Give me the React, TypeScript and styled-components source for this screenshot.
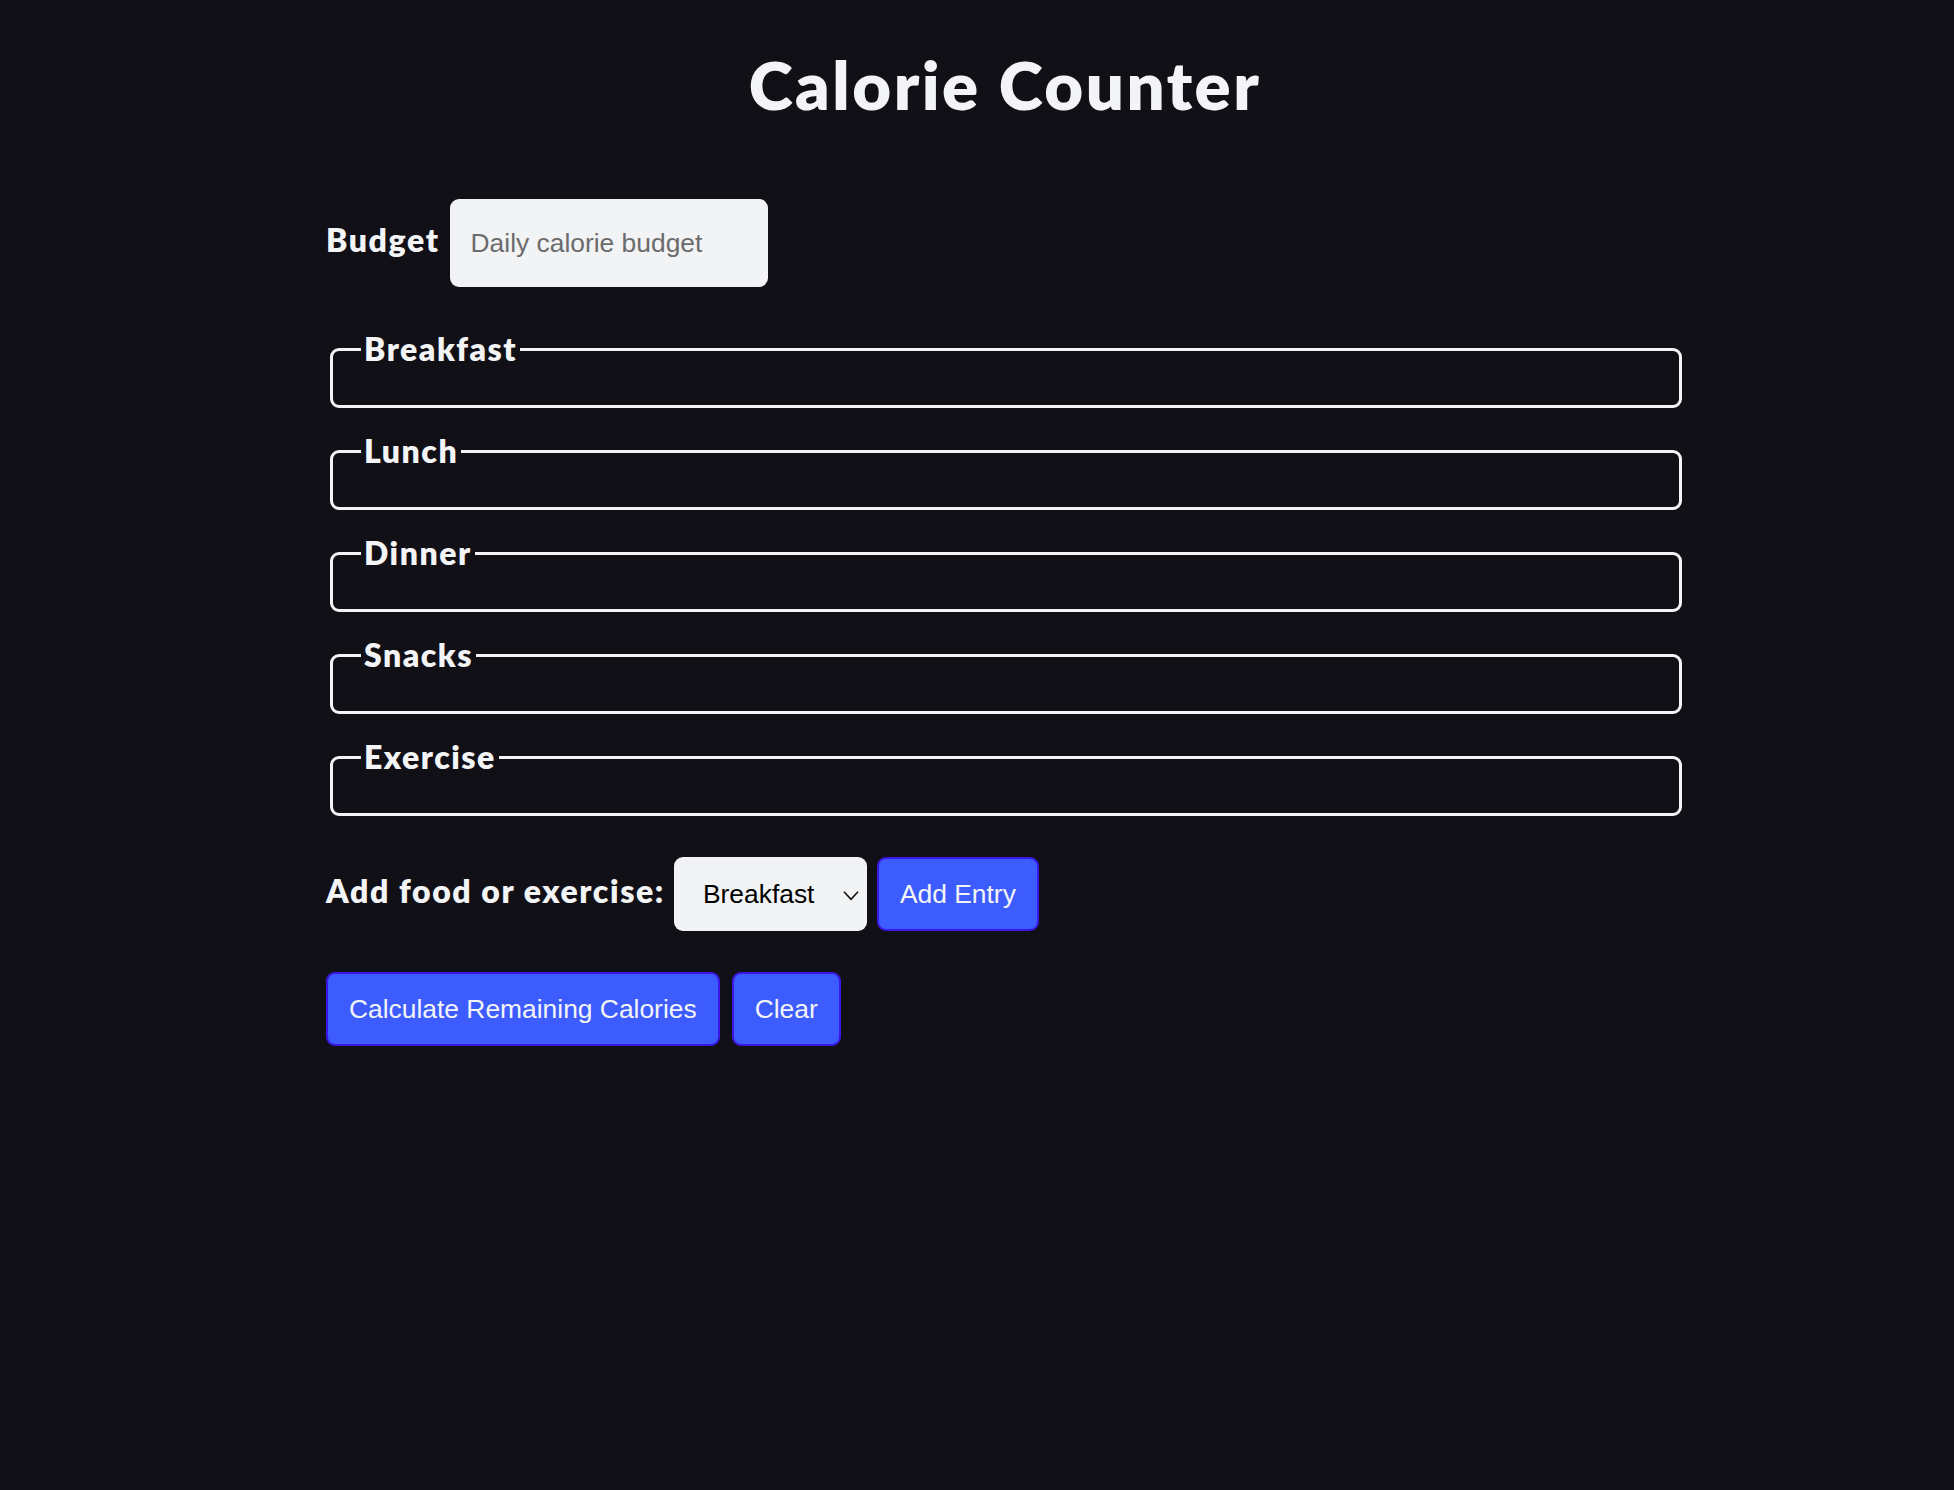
import React from "react";
import styled, { createGlobalStyle } from "styled-components";

const GlobalStyle = createGlobalStyle`
  html, body {
    margin: 0;
    padding: 0;
    background: #121017;
    color: #f3f4f6;
    font-family: "Lato", "Liberation Sans", sans-serif;
  }
  * { box-sizing: border-box; }
`;

const Page = styled.div`
  min-height: 1490px;
  display: flex;
  justify-content: center;
  padding-left: 56px;
`;

const Container = styled.main`
  width: 1358px;
  display: flex;
  flex-direction: column;
`;

const Title = styled.h1`
  margin: 44px 0 0;
  font-family: "Lato", sans-serif;
  font-weight: 800;
  font-size: 67px;
  line-height: 80px;
  letter-spacing: 2.5px;
  text-align: center;
  color: #f3f4f6;
`;

const BudgetRow = styled.div`
  display: flex;
  align-items: center;
  gap: 10px;
  margin-top: 75px;
  margin-bottom: 43px;
`;

const Label = styled.label`
  padding-bottom: 8px;
  font-family: "Lato", sans-serif;
  font-weight: 800;
  font-size: 32px;
  letter-spacing: 1.6px;
  color: #f3f4f6;
`;

const TextInput = styled.input`
  width: 318px;
  height: 88px;
  padding: 0 21px;
  border: none;
  border-radius: 9px;
  background: #f2f3f5;
  font-family: "Liberation Sans", Arial, sans-serif;
  font-size: 26.4px;
  color: #111;
  outline: none;
  &::placeholder {
    color: #6b6b6b;
  }
`;

const MealFieldset = styled.fieldset`
  margin: 0 2px 24px 4px;
  padding: 18px 28px 19px;
  border: 3px solid #f3f4f6;
  border-radius: 9px;
  min-width: 0;
`;

const Legend = styled.legend`
  padding: 0 3px;
  font-family: "Lato", sans-serif;
  font-weight: 800;
  font-size: 32px;
  line-height: 38px;
  letter-spacing: 1.5px;
  color: #f3f4f6;
`;

const ActionRow = styled.div`
  display: flex;
  align-items: center;
  margin-top: 17px;
`;

const SelectWrap = styled.div`
  position: relative;
  margin-left: 9px;
  margin-right: 10px;
`;

const Select = styled.select`
  appearance: none;
  -webkit-appearance: none;
  width: 193px;
  height: 74px;
  padding: 0 0 0 29px;
  border: none;
  border-radius: 9px;
  background: #f2f3f5;
  font-family: "Liberation Sans", Arial, sans-serif;
  font-size: 26.4px;
  color: #000;
  outline: none;
`;

const Chevron = styled.svg`
  position: absolute;
  right: 7px;
  top: 50%;
  transform: translateY(-35%);
  width: 18px;
  height: 12px;
  pointer-events: none;
`;

const Button = styled.button`
  height: 74px;
  padding: 0 21px;
  border: 2px solid #3a17e6;
  border-radius: 9px;
  background: #3d5cfe;
  color: #f3f4f6;
  font-family: "Liberation Sans", Arial, sans-serif;
  font-size: 26.4px;
  cursor: pointer;
`;

const ButtonRow = styled.div`
  display: flex;
  gap: 12px;
  margin-top: 41px;
`;

const meals = ["Breakfast", "Lunch", "Dinner", "Snacks", "Exercise"];

export default function App() {
  return (
    <>
      <GlobalStyle />
      <Page>
        <Container>
          <Title>Calorie Counter</Title>
          <BudgetRow>
            <Label htmlFor="budget">Budget</Label>
            <TextInput id="budget" type="number" placeholder="Daily calorie budget" />
          </BudgetRow>
          {meals.map((m) => (
            <MealFieldset key={m}>
              <Legend>{m}</Legend>
            </MealFieldset>
          ))}
          <ActionRow>
            <Label htmlFor="entry">Add food or exercise:</Label>
            <SelectWrap>
              <Select id="entry" defaultValue="breakfast">
                {meals.map((m) => (
                  <option key={m} value={m.toLowerCase()}>
                    {m}
                  </option>
                ))}
              </Select>
              <Chevron viewBox="0 0 18 12">
                <path d="M2 2 L9 9.5 L16 2" fill="none" stroke="#111" strokeWidth="1.6" />
              </Chevron>
            </SelectWrap>
            <Button type="button">Add Entry</Button>
          </ActionRow>
          <ButtonRow>
            <Button type="button">Calculate Remaining Calories</Button>
            <Button type="button">Clear</Button>
          </ButtonRow>
        </Container>
      </Page>
    </>
  );
}
